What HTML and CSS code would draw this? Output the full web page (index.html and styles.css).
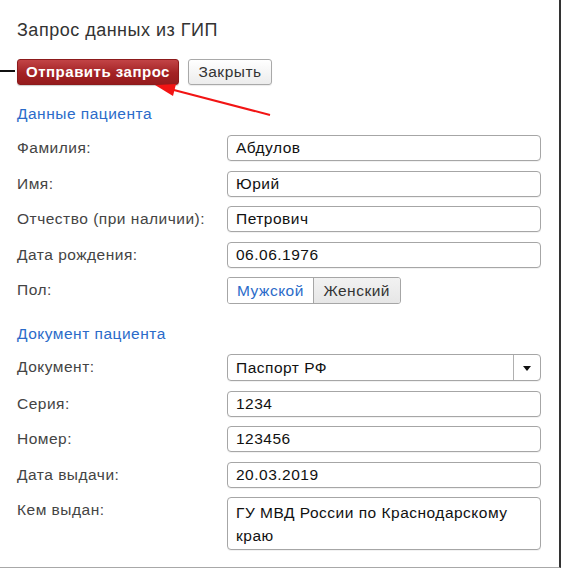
FILE: index.html
```html
<!DOCTYPE html>
<html lang="ru">
<head>
<meta charset="utf-8">
<title>Запрос данных из ГИП</title>
<link rel="stylesheet" href="styles.css">
</head>
<body>
<div class="frame">
  <h1 class="title">Запрос данных из ГИП</h1>
  <div class="actions">
    <button class="btn btn-primary">Отправить запрос</button>
    <button class="btn btn-default">Закрыть</button>
  </div>

  <h2 class="section">Данные пациента</h2>
  <div class="form">
    <label class="lbl">Фамилия:</label>
    <div class="field">Абдулов</div>
    <label class="lbl">Имя:</label>
    <div class="field">Юрий</div>
    <label class="lbl">Отчество (при наличии):</label>
    <div class="field">Петрович</div>
    <label class="lbl">Дата рождения:</label>
    <div class="field">06.06.1976</div>
    <label class="lbl">Пол:</label>
    <div class="seg">
      <span class="seg-item seg-active">Мужской</span>
      <span class="seg-item">Женский</span>
    </div>
  </div>

  <h2 class="section section-2">Документ пациента</h2>
  <div class="form">
    <label class="lbl">Документ:</label>
    <div class="select">
      <span class="select-value">Паспорт РФ</span>
      <span class="select-btn"><span class="caret"></span></span>
    </div>
    <label class="lbl">Серия:</label>
    <div class="field">1234</div>
    <label class="lbl">Номер:</label>
    <div class="field">123456</div>
    <label class="lbl">Дата выдачи:</label>
    <div class="field">20.03.2019</div>
    <label class="lbl">Кем выдан:</label>
    <div class="field area">ГУ МВД России по Краснодарскому краю</div>
  </div>
</div>

<div class="pointer-line"></div>
<svg class="arrow" width="561" height="570" viewBox="0 0 561 570">
  <line x1="270" y1="115" x2="170" y2="89" stroke="#f21414" stroke-width="2"/>
  <polygon points="155,85 176,84 173,96" fill="#f21414"/>
</svg>
</body>
</html>
```

FILE: styles.css
```css
html, body {
  margin: 0;
  padding: 0;
  background: #fff;
}

body {
  font-family: "Liberation Sans", Arial, sans-serif;
  color: #444;
  font-size: 15.5px;
  letter-spacing: 0.5px;
  position: relative;
  width: 561px;
  height: 570px;
  overflow: hidden;
}

.frame {
  box-sizing: border-box;
  width: 561px;
  height: 568px;
  border-right: 2px solid #333;
  border-bottom: 1px solid #a8a8a8;
  padding: 20px 0 0 17px;
}

.title {
  margin: 0;
  font-size: 18px;
  font-weight: normal;
  line-height: 20px;
  color: #333;
}

.actions {
  display: flex;
  gap: 9px;
  margin-top: 19px;
}

.btn {
  font-family: "Liberation Sans", Arial, sans-serif;
  letter-spacing: 0.5px;
  height: 26px;
  padding: 0;
  border-radius: 3px;
  line-height: 24px;
  cursor: pointer;
}

.btn-primary {
  width: 162px;
  font-size: 15px;
  color: #fff;
  font-weight: bold;
  background: linear-gradient(#c24446, #a32224 55%, #951b1d);
  border: 1px solid #8c1a1b;
  box-shadow: 0 1px 1px rgba(0, 0, 0, 0.2);
}

.btn-default {
  width: 84px;
  font-size: 15.5px;
  color: #333;
  background: linear-gradient(#ffffff, #ececec);
  border: 1px solid #a9a9a9;
  box-shadow: 0 1px 1px rgba(0, 0, 0, 0.08);
}

.section {
  margin: 19px 0 0 0;
  font-size: 15.5px;
  font-weight: normal;
  line-height: 20px;
  color: #2b6bc9;
}

.section-2 {
  margin-top: 20px;
}

.form {
  display: grid;
  grid-template-columns: 210px 314px;
  row-gap: 9.5px;
  margin-top: 11px;
  align-items: start;
}

.section-2 + .form {
  margin-top: 10px;
}

.lbl {
  line-height: 26px;
  color: #444;
  white-space: nowrap;
}

.field {
  box-sizing: border-box;
  height: 26px;
  border: 1px solid #a6a6a6;
  border-radius: 4px;
  padding: 0 8px;
  line-height: 24px;
  color: #111;
  background: #fff;
  box-shadow: 0 1px 0 rgba(0, 0, 0, 0.05);
}

.area {
  height: 53px;
  line-height: 23px;
  padding-top: 3px;
  padding-right: 20px;
}

.seg {
  display: flex;
  height: 27px;
  box-sizing: border-box;
  border: 1px solid #a6a6a6;
  border-radius: 3px;
  overflow: hidden;
  justify-self: start;
}

.seg-item {
  line-height: 25px;
  padding: 0 9.5px 0 9px;
  color: #333;
  background: linear-gradient(#f2f2f2, #e6e6e6);
}

.seg-active {
  background: #fff;
  color: #2b6bc9;
  border-right: 1px solid #a6a6a6;
}

.select {
  box-sizing: border-box;
  display: flex;
  height: 27px;
  border: 1px solid #a6a6a6;
  border-radius: 4px;
  background: #fff;
  color: #111;
  box-shadow: 0 1px 0 rgba(0, 0, 0, 0.05);
}

.select-value {
  flex: 1;
  padding: 0 8px;
  line-height: 25px;
}

.select-btn {
  width: 26px;
  border-left: 1px solid #b0b0b0;
  display: flex;
  align-items: center;
  justify-content: center;
}

.caret {
  width: 0;
  height: 0;
  border-left: 4.5px solid transparent;
  border-right: 4.5px solid transparent;
  border-top: 5px solid #111;
  margin-top: 1px;
}

.pointer-line {
  position: absolute;
  left: 0;
  top: 70px;
  width: 15px;
  height: 2px;
  background: #111;
}

.arrow {
  position: absolute;
  left: 0;
  top: 0;
  pointer-events: none;
}
```
